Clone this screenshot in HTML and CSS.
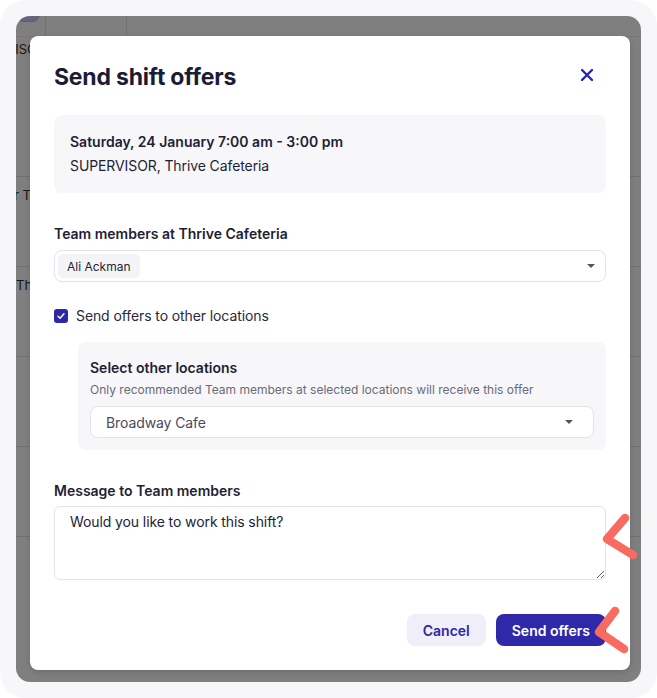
FILE: index.html
```html
<!DOCTYPE html>
<html lang="en">
<head>
    <meta charset="UTF-8">
    <meta name="viewport" content="width=device-width, initial-scale=1.0">
    <title>Send shift offers</title>
    <link rel="stylesheet" href="styles.css">
</head>
<body>
    <div class="frame">
        <div class="backdrop">
            <!-- dimmed schedule page behind the dialog -->
            <div class="app">
                <div class="app-head">
                    <div class="app-cell app-cell-first"><span class="app-pill"></span></div>
                    <div class="app-cell app-cell-second"></div>
                </div>
                <div class="app-row app-row-tall"><span class="app-text app-text-role">SUPERVISOR</span></div>
                <div class="app-row"><span class="app-text app-text-loc">r Thrive Cafeteria</span></div>
                <div class="app-row"><span class="app-text">Thrive Cafeteria</span></div>
                <div class="app-row"></div>
                <div class="app-row"></div>
            </div>
            <div class="scrim"></div>

            <div class="modal" role="dialog">
                <div class="modal-header">
                    <h1>Send shift offers</h1>
                    <button class="close-btn" aria-label="Close">
                        <svg width="12" height="12" viewBox="0 0 12 12">
                            <path d="M1 1 L11 11 M11 1 L1 11" stroke="#2e27a8" stroke-width="2.4" stroke-linecap="round"/>
                        </svg>
                    </button>
                </div>

                <div class="shift-card">
                    <div class="shift-time">Saturday, 24 January 7:00 am - 3:00 pm</div>
                    <div class="shift-role">SUPERVISOR, Thrive Cafeteria</div>
                </div>

                <div class="field-label">Team members at Thrive Cafeteria</div>
                <div class="multi-select">
                    <span class="chip">Ali Ackman</span>
                    <span class="caret"></span>
                </div>

                <label class="check-row">
                    <span class="checkbox">
                        <svg width="10" height="10" viewBox="0 0 10 10">
                            <path d="M2 5.2 L4.1 7.2 L8 2.8" fill="none" stroke="#fff" stroke-width="1.4" stroke-linecap="round" stroke-linejoin="round"/>
                        </svg>
                    </span>
                    Send offers to other locations
                </label>

                <div class="locations-panel">
                    <div class="panel-title">Select other locations</div>
                    <div class="panel-hint">Only recommended Team members at selected locations will receive this offer</div>
                    <div class="single-select">
                        <span>Broadway Cafe</span>
                        <span class="caret"></span>
                    </div>
                </div>

                <div class="field-label field-label-message">Message to Team members</div>
                <textarea class="message">Would you like to work this shift?</textarea>

                <div class="actions">
                    <button class="btn btn-cancel">Cancel</button>
                    <button class="btn btn-primary">Send offers</button>
                </div>
            </div>
        </div>

        <svg class="marks" width="657" height="698" viewBox="0 0 657 698">
            <polyline points="625,518 607,539 633,555" fill="none" stroke="#f86b61" stroke-width="8.5" stroke-linecap="round" stroke-linejoin="round"/>
            <polyline points="615,611 599,632 624,649" fill="none" stroke="#f86b61" stroke-width="8.5" stroke-linecap="round" stroke-linejoin="round"/>
        </svg>
    </div>
</body>
</html>
```

FILE: styles.css
```css
body {
    margin: 0;
    background: #fff;
    font-family: 'Inter', 'Liberation Sans', sans-serif;
    color: #23223a;
}
.frame {
    position: relative;
    width: 657px;
    height: 698px;
    box-sizing: border-box;
    padding: 16px;
    background: #f7f7fa;
    border-radius: 26px;
}
.backdrop {
    position: relative;
    height: 666px;
    border-radius: 14px;
    overflow: hidden;
    background: #fff;
}

/* page behind the dialog */
.app {
    display: flex;
    flex-direction: column;
    height: 100%;
    background: #fff;
    font-size: 13px;
    color: #333;
}
.app-head {
    display: flex;
    height: 20px;
    flex-shrink: 0;
    border-bottom: 1px solid #eee;
}
.app-cell-first {
    width: 29px;
    border-right: 1px solid #e4e4e4;
    overflow: hidden;
}
.app-cell-second {
    width: 80px;
    border-right: 1px solid #e4e4e4;
}
.app-pill {
    display: block;
    width: 24px;
    height: 20px;
    margin-top: -14px;
    border-radius: 8px;
    background: #cfc9f6;
    border: 1px solid #b7b0ee;
    box-sizing: border-box;
}
.app-row {
    height: 90px;
    flex-shrink: 0;
    border-bottom: 1px solid #e2e2e2;
    box-sizing: border-box;
    padding-top: 10px;
    white-space: nowrap;
}
.app-row-tall {
    height: 140px;
    padding-top: 4px;
}
.app-text {
    display: inline-block;
}
.app-text-role {
    margin-left: -52px;
}
.app-text-loc {
    margin-left: -2px;
}
.scrim {
    position: absolute;
    inset: 0;
    background: rgba(0, 0, 0, 0.5);
}

/* dialog */
.modal {
    position: absolute;
    left: 14px;
    top: 20px;
    width: 600px;
    height: 634px;
    box-sizing: border-box;
    padding: 23px 24px 24px;
    background: #fff;
    border-radius: 8px;
    box-shadow: 0 2px 6px rgba(0, 0, 0, 0.15);
    display: flex;
    flex-direction: column;
}
.modal-header {
    display: flex;
    justify-content: space-between;
    align-items: center;
    height: 32px;
}
.modal-header h1 {
    margin: 3px 0 0;
    font-size: 23px;
    line-height: 32px;
    font-weight: 700;
    color: #1c1b34;
    letter-spacing: -0.2px;
}
.close-btn {
    display: flex;
    padding: 0;
    margin-right: 13px;
    border: none;
    background: none;
    cursor: pointer;
}
.shift-card {
    margin-top: 24px;
    padding: 15px 16px;
    background: #f7f7fa;
    border-radius: 8px;
    font-size: 14px;
    line-height: 24px;
    color: #1f1e35;
}
.shift-time {
    font-weight: 600;
}
.shift-role {
    letter-spacing: -0.1px;
}
.field-label {
    margin-top: 31px;
    margin-bottom: 6px;
    font-size: 14px;
    line-height: 20px;
    font-weight: 600;
    color: #1f1e35;
}
.field-label-message {
    margin-bottom: 5px;
}
.multi-select {
    display: flex;
    align-items: center;
    justify-content: space-between;
    height: 32px;
    box-sizing: border-box;
    padding: 2px 10px 2px 3px;
    border: 1px solid #e3e3eb;
    border-radius: 8px;
}
.chip {
    display: flex;
    align-items: center;
    height: 24px;
    padding: 0 9px;
    background: #f4f4f7;
    border-radius: 5px;
    font-size: 12px;
    color: #24233a;
}
.caret {
    width: 0;
    height: 0;
    border-left: 4px solid transparent;
    border-right: 4px solid transparent;
    border-top: 4px solid #55545f;
}
.check-row {
    display: flex;
    align-items: center;
    gap: 8px;
    margin-top: 24px;
    font-size: 14px;
    line-height: 20px;
    letter-spacing: -0.1px;
    color: #2a2940;
}
.checkbox {
    display: flex;
    align-items: center;
    justify-content: center;
    width: 14px;
    height: 14px;
    border-radius: 3px;
    background: #2e27a8;
}
.locations-panel {
    margin: 16px 0 0 24px;
    padding: 15px 12px 12px;
    background: #f7f7fa;
    border-radius: 8px;
}
.panel-title {
    font-size: 14px;
    line-height: 22px;
    font-weight: 600;
    color: #1f1e35;
}
.panel-hint {
    margin-top: 2px;
    font-size: 12px;
    line-height: 18px;
    color: #6b6a78;
}
.single-select {
    display: flex;
    align-items: center;
    justify-content: space-between;
    height: 32px;
    box-sizing: border-box;
    margin-top: 7px;
    padding: 0 20px 0 15px;
    background: #fff;
    border: 1px solid #e3e3eb;
    border-radius: 8px;
    font-size: 14px;
    letter-spacing: -0.1px;
    color: #4b4a5a;
}
.message {
    display: block;
    height: 74px;
    box-sizing: border-box;
    padding: 5px 15px;
    border: 1px solid #e3e3eb;
    border-radius: 6px;
    font-family: inherit;
    font-size: 14px;
    line-height: 20px;
    letter-spacing: -0.1px;
    color: #23223a;
    resize: vertical;
}
.actions {
    display: flex;
    justify-content: flex-end;
    gap: 10px;
    margin-top: 34px;
}
.btn {
    height: 32px;
    padding: 0 16px;
    border: none;
    border-radius: 8px;
    font-family: inherit;
    font-size: 14px;
    font-weight: 600;
    cursor: pointer;
}
.btn-cancel {
    background: #efeef9;
    color: #2e27a8;
}
.btn-primary {
    background: #2f28a8;
    color: #fff;
}
.marks {
    position: absolute;
    left: 0;
    top: 0;
    pointer-events: none;
}
```
